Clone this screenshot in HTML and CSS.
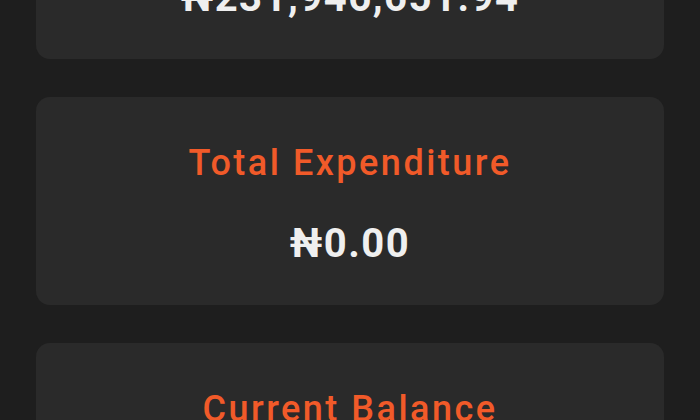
FILE: index.html
```html
<!DOCTYPE html>
<html>
<head>
    <link rel="stylesheet" href="styles.css">
</head>
<body>
    <div class="summary-list">
        <div class="summary-card">
            <div class="summary-title">Total Income</div>
            <div class="summary-value">₦231,946,651.94</div>
        </div>
        <div class="summary-card">
            <div class="summary-title">Total Expenditure</div>
            <div class="summary-value">₦0.00</div>
        </div>
        <div class="summary-card">
            <div class="summary-title">Current Balance</div>
            <div class="summary-value">₦231,946,651.94</div>
        </div>
    </div>
</body>
</html>
```

FILE: styles.css
```css
body {
    font-family: Roboto, "Noto Sans", sans-serif;
    background-color: #1e1e1e;
    margin: 0;
    padding: 0 36px;
    overflow: hidden;
}

.summary-list {
    display: flex;
    flex-direction: column;
    gap: 38px;
    margin-top: -149px;
}

.summary-card {
    background-color: #2a2a2a;
    border-radius: 14px;
    padding: 45px 20px 37px;
    text-align: center;
}

.summary-title {
    font-size: 36px;
    line-height: 42px;
    font-weight: 500;
    letter-spacing: 2.5px;
    color: #f15a29;
}

.summary-value {
    margin-top: 36px;
    font-size: 40px;
    line-height: 48px;
    font-weight: bold;
    letter-spacing: 1.5px;
    color: #efefef;
}
```
